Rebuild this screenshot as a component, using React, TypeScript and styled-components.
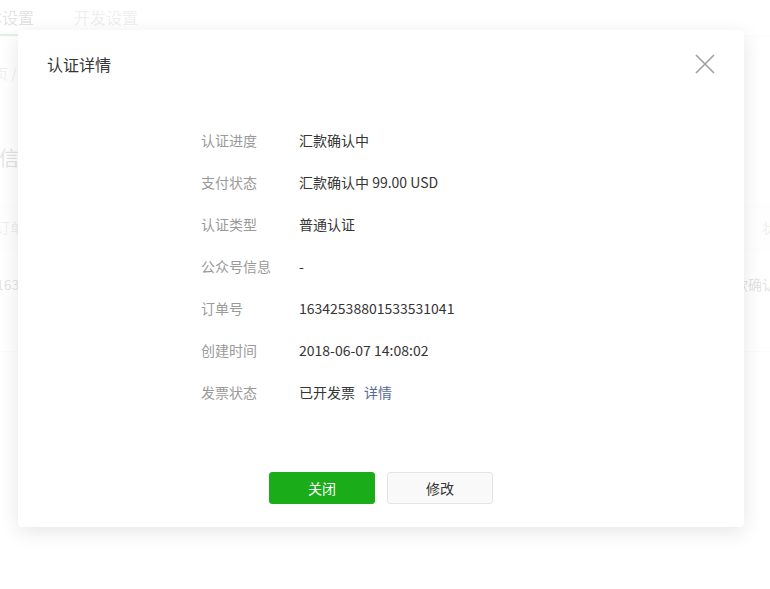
import React from "react";
import styled, { createGlobalStyle } from "styled-components";

const Global = createGlobalStyle`
  html, body { margin: 0; padding: 0; background: #fff; }
  body {
    font-family: "Noto Sans CJK SC", "Noto Sans", "Liberation Sans", sans-serif;
    color: #353535;
    width: 770px; height: 589px; overflow: hidden;
  }
`;

const Page = styled.div`
  width: 770px;
  height: 589px;
  overflow: hidden;
  position: relative;
  background: #fff;
`;

const Tabs = styled.div`
  display: flex;
  gap: 32px;
  height: 36px;
  margin-left: -34px;
  border-bottom: 1px solid #e7e7eb;
  font-size: 16px;
  line-height: 34px;
`;

const Tab = styled.div<{ $active?: boolean }>`
  color: ${(p) => (p.$active ? "#353535" : "#8d8d8d")};
  border-bottom: 2px solid ${(p) => (p.$active ? "#1aad19" : "transparent")};
  padding: 0 4px;
`;

const Crumb = styled.div`
  margin: 26px 0 0 -20px;
  font-size: 14px;
  color: #8d8d8d;
`;

const Heading = styled.div`
  margin: 60px 0 0 -1px;
  font-size: 20px;
  color: #353535;
`;

const Table = styled.div`
  margin-top: 30px;
  margin-left: -4px;
  width: 800px;
  border-bottom: 1px solid #e7e7eb;
`;

const TRow = styled.div<{ $head?: boolean }>`
  display: flex;
  justify-content: space-between;
  align-items: ${(p) => (p.$head ? "center" : "flex-start")};
  height: ${(p) => (p.$head ? "50px" : "99px")};
  padding: ${(p) => (p.$head ? "0 6px 0 0" : "22px 6px 0 0")};
  box-sizing: border-box;
  line-height: 20px;
  font-size: 14px;
  color: ${(p) => (p.$head ? "#8d8d8d" : "#353535")};
  background: ${(p) => (p.$head ? "#f6f8f9" : "#fff")};
`;

const Overlay = styled.div`
  position: absolute;
  inset: 0;
  background: rgba(255, 255, 255, 0.86);
  padding: 30px 26px 0 18px;
  box-sizing: border-box;
`;

const Modal = styled.div`
  width: 726px;
  height: 497px;
  background: #fff;
  border-radius: 4px;
  box-shadow: 0 5px 20px rgba(0, 0, 0, 0.1);
  display: flex;
  flex-direction: column;
  box-sizing: border-box;
`;

const Header = styled.div`
  display: flex;
  align-items: center;
  justify-content: space-between;
  height: 67px;
  padding: 0 28px 0 29px;
`;

const Title = styled.div`
  font-size: 16px;
  color: #353535;
`;

const Close = styled.button`
  width: 22px;
  height: 22px;
  padding: 0;
  border: 0;
  background: none;
  display: flex;
  align-items: center;
  justify-content: center;
`;

const Body = styled.div`
  padding: 22px 0 0 183px;
  flex: 1;
`;

const Row = styled.div`
  display: flex;
  height: 42px;
  align-items: center;
  font-size: 14px;
`;

const Label = styled.div`
  width: 98px;
  color: #9a9a9a;
`;

const Value = styled.div`
  color: #353535;
`;

const Link = styled.a`
  color: #576b95;
  text-decoration: none;
  margin-left: 9px;
`;

const Footer = styled.div`
  display: flex;
  justify-content: center;
  gap: 12px;
  padding-bottom: 23px;
`;

const Button = styled.button<{ $primary?: boolean }>`
  width: 106px;
  height: 32px;
  border-radius: 3px;
  font-family: inherit;
  font-size: 14px;
  border: 1px solid ${(p) => (p.$primary ? "#1aad19" : "#e4e4e4")};
  background: ${(p) => (p.$primary ? "#1aad19" : "#f9f9f9")};
  color: ${(p) => (p.$primary ? "#fff" : "#353535")};
`;

const rows: [string, React.ReactNode][] = [
  ["认证进度", "汇款确认中"],
  ["支付状态", "汇款确认中 99.00 USD"],
  ["认证类型", "普通认证"],
  ["公众号信息", "-"],
  ["订单号", "16342538801533531041"],
  ["创建时间", "2018-06-07 14:08:02"],
  [
    "发票状态",
    <>
      已开发票<Link href="#">详情</Link>
    </>,
  ],
];

export default function App() {
  return (
    <>
      <Global />
      <Page>
        <Tabs>
          <Tab $active>基本设置</Tab>
          <Tab>开发设置</Tab>
        </Tabs>
        <Crumb>首页 /</Crumb>
        <Heading>信息</Heading>
        <Table>
          <TRow $head>
            <span>订单号</span>
            <span>状态</span>
          </TRow>
          <TRow>
            <span>16342538801533531041</span>
            <span>汇款确认中</span>
          </TRow>
        </Table>
        <Overlay>
          <Modal>
            <Header>
              <Title>认证详情</Title>
              <Close aria-label="关闭">
                <svg width="20" height="20" viewBox="0 0 20 20">
                  <path d="M1 1L19 19M19 1L1 19" stroke="#9f9f9f" strokeWidth="1.6" fill="none" />
                </svg>
              </Close>
            </Header>
            <Body>
              {rows.map(([k, v]) => (
                <Row key={k}>
                  <Label>{k}</Label>
                  <Value>{v}</Value>
                </Row>
              ))}
            </Body>
            <Footer>
              <Button $primary>关闭</Button>
              <Button>修改</Button>
            </Footer>
          </Modal>
        </Overlay>
      </Page>
    </>
  );
}
